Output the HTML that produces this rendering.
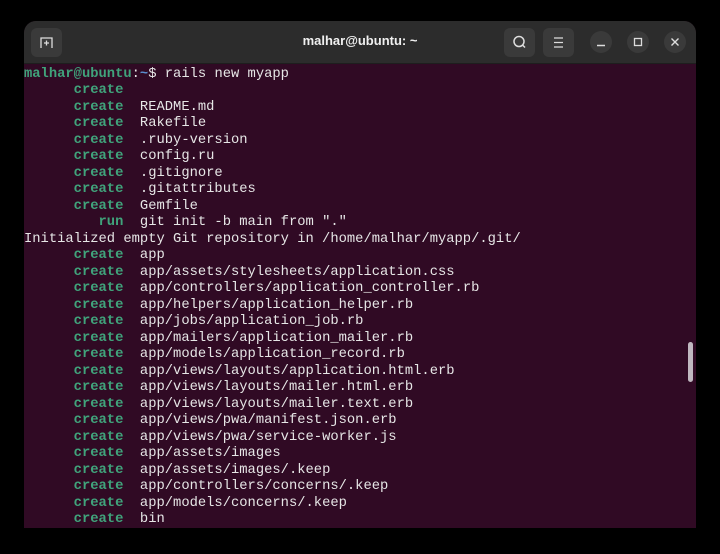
<!DOCTYPE html>
<html><head><style>
body{margin:0;width:720px;height:554px;background:#000;overflow:hidden;font-family:"Liberation Sans",sans-serif}
.win{position:absolute;left:24px;top:21px;width:672px;height:507px;background:#300a24;border-radius:12px 12px 0 0;overflow:hidden}
.tb{position:absolute;left:0;top:0;width:672px;height:42px;background:#2c2c2c;border-bottom:1px solid #1e1e1e}
.title{position:absolute;left:0;width:100%;top:12px;text-align:center;color:#f0f0f0;font-weight:bold;font-size:13px}
.btn{position:absolute;top:7px;width:31px;height:29px;background:#3a3a3a;border-radius:6px}
.c{position:absolute;top:10px;width:22px;height:22px;border-radius:50%;background:#3a3a3a}
pre{position:absolute;left:0;top:46px;margin:0;font-family:"Liberation Mono",monospace;font-size:13.8px;line-height:16.48px;color:#e6e6e6}
.g{color:#40a37b;font-weight:bold}.b{color:#5b8fd0;font-weight:bold}.w{color:#e6e6e6}
.sb{position:absolute;left:664px;top:321px;width:5px;height:40px;border-radius:3px;background:#c0b8c0}
</style></head><body>
<div class="win">
<div class="tb">
<div class="btn" style="left:7px"><svg width="31" height="29"><path d="M10 20V10h11v10M15.5 12.5v5M13 15h5" stroke="#ddd" stroke-width="1.3" fill="none"/></svg></div>
<div class="title">malhar@ubuntu: ~</div>
<div class="btn" style="left:480px"><svg width="31" height="29"><circle cx="15" cy="13.5" r="5" stroke="#ddd" stroke-width="1.5" fill="none"/><path d="M18.5 17l2.5 2.5" stroke="#ddd" stroke-width="1.5"/></svg></div>
<div class="btn" style="left:519px"><svg width="31" height="29"><path d="M11 10h9M11 14.5h9M11 19h9" stroke="#ddd" stroke-width="1.3"/></svg></div>
<div class="c" style="left:566px"><svg width="22" height="22"><path d="M7 14.5h8" stroke="#ddd" stroke-width="1.5"/></svg></div>
<div class="c" style="left:603px"><svg width="22" height="22"><rect x="7.5" y="7.5" width="7" height="7" stroke="#ddd" stroke-width="1.3" fill="none"/></svg></div>
<div class="c" style="left:640px"><svg width="22" height="22"><path d="M7.5 7.5l7 7M14.5 7.5l-7 7" stroke="#ddd" stroke-width="1.4"/></svg></div>
</div>
<pre><span class="g">malhar@ubuntu</span>:<span class="b">~</span>$ rails new myapp
<span class="g">      create</span>
<span class="g">      create</span>  README.md
<span class="g">      create</span>  Rakefile
<span class="g">      create</span>  .ruby-version
<span class="g">      create</span>  config.ru
<span class="g">      create</span>  .gitignore
<span class="g">      create</span>  .gitattributes
<span class="g">      create</span>  Gemfile
<span class="g">         run</span>  git init -b main from "."
Initialized empty Git repository in /home/malhar/myapp/.git/
<span class="g">      create</span>  app
<span class="g">      create</span>  app/assets/stylesheets/application.css
<span class="g">      create</span>  app/controllers/application_controller.rb
<span class="g">      create</span>  app/helpers/application_helper.rb
<span class="g">      create</span>  app/jobs/application_job.rb
<span class="g">      create</span>  app/mailers/application_mailer.rb
<span class="g">      create</span>  app/models/application_record.rb
<span class="g">      create</span>  app/views/layouts/application.html.erb
<span class="g">      create</span>  app/views/layouts/mailer.html.erb
<span class="g">      create</span>  app/views/layouts/mailer.text.erb
<span class="g">      create</span>  app/views/pwa/manifest.json.erb
<span class="g">      create</span>  app/views/pwa/service-worker.js
<span class="g">      create</span>  app/assets/images
<span class="g">      create</span>  app/assets/images/.keep
<span class="g">      create</span>  app/controllers/concerns/.keep
<span class="g">      create</span>  app/models/concerns/.keep
<span class="g">      create</span>  bin</pre>
<div class="sb"></div>
</div>
</body></html>
